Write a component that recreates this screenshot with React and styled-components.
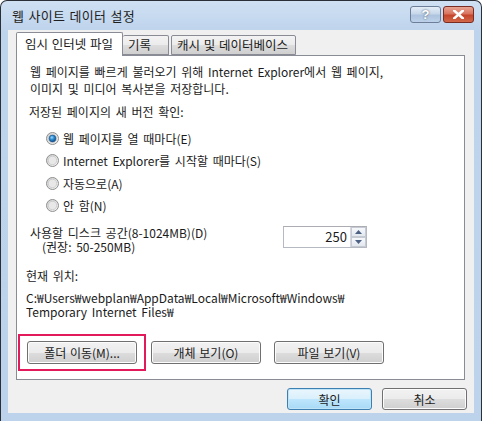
import React from "react";
import styled, { createGlobalStyle } from "styled-components";

const GlobalStyle = createGlobalStyle`
  html, body {
    margin: 0;
    padding: 0;
    background: #ffffff;
  }
  body {
    font-family: "Noto Sans CJK KR", "Liberation Sans", sans-serif;
    font-size: 12px;
    color: #1b1b1b;
    word-spacing: 2px;
  }
`;

const Window = styled.div`
  width: 482px;
  height: 421px;
  box-sizing: border-box;
  border: 1px solid #2b2f38;
  border-bottom: none;
  border-radius: 7px 7px 0 0;
  background: linear-gradient(180deg, #cfe0f3 0px, #bed4ec 30px, #bdd3eb 100%);
  display: flex;
  flex-direction: column;
  overflow: hidden;
`;

const TitleBar = styled.div`
  height: 29px;
  display: flex;
  align-items: center;
  justify-content: space-between;
  padding: 0 7px 0 11px;
  flex-shrink: 0;
`;

const Title = styled.span`
  font-size: 13px;
  color: #1e1e1e;
  letter-spacing: 0.3px;
  word-spacing: 1px;
  white-space: nowrap;
`;

const CaptionButtons = styled.div`
  display: flex;
  gap: 2px;
  margin-top: -2px;
`;

const CaptionButton = styled.div`
  width: 31px;
  height: 17px;
  box-sizing: border-box;
  border: 1px solid ${(p) => (p.$close ? "#7a2b22" : "#6d7f98")};
  border-radius: 3px;
  background: ${(p) =>
    p.$close
      ? "linear-gradient(180deg, #e8a493 0%, #d8735e 45%, #c4452b 55%, #d2684a 100%)"
      : "linear-gradient(180deg, #e4edf7 0%, #c7d7ea 45%, #adc3de 55%, #bdd2ea 100%)"};
  display: flex;
  align-items: center;
  justify-content: center;
  color: #fff;
  font-family: "Liberation Sans", sans-serif;
  font-weight: bold;
  font-size: 13px;
  text-shadow: 0 0 2px #3a4a60;
`;

const Client = styled.div`
  flex: 1;
  margin: 0 7px 8px 7px;
  background: #f0f0f0;
  display: flex;
  flex-direction: column;
  padding: 1px 8px 0 8px;
`;

const Tabs = styled.div`
  display: flex;
  align-items: flex-end;
  height: 24px;
  position: relative;
  z-index: 1;
`;

const Tab = styled.div`
  height: ${(p) => (p.$active ? "24px" : "20px")};
  box-sizing: border-box;
  padding: 0 ${(p) => (p.$active ? "8px" : "5px")};
  margin-right: ${(p) => p.$gap || 0}px;
  border: 1px solid #898c95;
  border-bottom: ${(p) => (p.$active ? "none" : "1px solid #898c95")};
  border-left: ${(p) => (p.$noLeft ? "none" : "1px solid #898c95")};
  border-radius: 2px 2px 0 0;
  background: ${(p) =>
    p.$active ? "#ffffff" : "linear-gradient(180deg, #f3f3f3 0%, #ebebeb 50%, #dddddd 51%, #cfcfcf 100%)"};
  width: ${(p) => p.$w}px;
  display: flex;
  align-items: center;
  font-size: 12.5px;
  word-spacing: 1px;
  white-space: nowrap;
  overflow: hidden;
  line-height: 1;
  margin-bottom: ${(p) => (p.$active ? "-1px" : "0")};
`;

const Panel = styled.div`
  width: 449px;
  height: 325px;
  box-sizing: border-box;
  background: #ffffff;
  border: 1px solid #898c95;
  padding: 7px 10px 0 9px;
  display: flex;
  flex-direction: column;
`;

const Para = styled.p`
  margin: 0 0 0 4px;
  line-height: 17px;
`;

const Label = styled.div`
  margin: ${(p) => p.$m || "0"};
  line-height: ${(p) => p.$lh || 17}px;
  padding-left: ${(p) => p.$pl || 0}px;
`;

const RadioList = styled.div`
  display: flex;
  flex-direction: column;
  padding-left: 20px;
  margin-top: 7px;
`;

const RadioRow = styled.div`
  display: flex;
  align-items: center;
  gap: 4px;
  height: 22.5px;
`;

const DiskRow = styled.div`
  display: flex;
  align-items: flex-start;
  justify-content: space-between;
  margin-top: 9px;
  padding-right: 87px;
`;

const Spinner = styled.div`
  width: 84px;
  height: 22px;
  box-sizing: border-box;
  border: 1px solid #b5b9c2;
  border-top-color: #abadb3;
  display: flex;
  background: #fff;
`;

const SpinValue = styled.div`
  flex: 1;
  text-align: right;
  padding-right: 3px;
  font-size: 13px;
  line-height: 20px;
`;

const SpinButtons = styled.div`
  width: 15px;
  display: flex;
  flex-direction: column;
  border-left: 1px solid #d6d9df;
`;

const SpinButton = styled.div`
  flex: 1;
  box-sizing: border-box;
  border: 1px solid #c5cad3;
  background: linear-gradient(180deg, #f6f8fb 0%, #e3e8ef 100%);
  display: flex;
  align-items: center;
  justify-content: center;
`;

const PathText = styled.div`
  margin-top: 7px;
  line-height: 14px;
`;

const ButtonRow = styled.div`
  display: flex;
  gap: ${(p) => p.$gap || 13}px;
  margin: ${(p) => p.$m || "0"};
`;

const Highlight = styled.div`
  padding: 5px 7px;
  margin: -7px -8px -7px -9px;
  border: 2px solid #e2195b;
  display: flex;
`;

const Button = styled.div`
  width: ${(p) => p.$w || 110}px;
  height: ${(p) => p.$h || 23}px;
  box-sizing: border-box;
  border: 1px solid ${(p) => (p.$default ? "#3c7fb1" : "#707070")};
  border-radius: 3px;
  background: ${(p) =>
    p.$default
      ? "linear-gradient(180deg, #eaf6fd 0%, #d9f0fc 50%, #bee6fd 51%, #a7d9f5 100%)"
      : "linear-gradient(180deg, #f2f2f2 0%, #ebebeb 50%, #dddddd 51%, #cfcfcf 100%)"};
  box-shadow: inset 0 0 0 1px ${(p) => (p.$default ? "#bfe3f7" : "#fcfcfc")};
  display: flex;
  align-items: center;
  justify-content: center;
  font-size: 12px;
  word-spacing: 1px;
  white-space: nowrap;
  color: #1b1b1b;
`;

const Footer = styled.div`
  display: flex;
  justify-content: flex-end;
  gap: 10px;
  padding: 8px 0 0 0;
  margin-right: -1px;
`;

const Radio = ({ checked }) => (
  <svg width="13" height="13" viewBox="0 0 13 13">
    <defs>
      <linearGradient id="rbg" x1="0" y1="0" x2="1" y2="1">
        <stop offset="0" stopColor="#cfcfcf" />
        <stop offset="1" stopColor="#f7f7f7" />
      </linearGradient>
      <radialGradient id="rdot" cx="0.4" cy="0.35" r="0.7">
        <stop offset="0" stopColor="#9fd7fb" />
        <stop offset="0.45" stopColor="#2a8bd0" />
        <stop offset="1" stopColor="#0c4a85" />
      </radialGradient>
    </defs>
    <circle cx="6.5" cy="6.5" r="6" fill="url(#rbg)" stroke="#8e8f8f" strokeWidth="1" />
    <circle cx="6.5" cy="6.5" r="4.2" fill="#e8e8e8" stroke="#c0c0c0" strokeWidth="0.6" />
    {checked && <circle cx="6.5" cy="6.5" r="3.4" fill="url(#rdot)" stroke="#1b4f86" strokeWidth="0.6" />}
  </svg>
);

const Arrow = ({ up }) => (
  <svg width="7" height="4" viewBox="0 0 7 4">
    <path d={up ? "M0 4 L3.5 0 L7 4 Z" : "M0 0 L3.5 4 L7 0 Z"} fill="#4d6185" />
  </svg>
);

export default function App() {
  return (
    <>
      <GlobalStyle />
      <Window>
        <TitleBar>
          <Title>웹 사이트 데이터 설정</Title>
          <CaptionButtons>
            <CaptionButton>?</CaptionButton>
            <CaptionButton $close>
              <svg width="11" height="9" viewBox="0 0 11 9">
                <path d="M1 0.5 L10 8.5 M10 0.5 L1 8.5" stroke="#fff" strokeWidth="2.6" strokeLinecap="square" />
              </svg>
            </CaptionButton>
          </CaptionButtons>
        </TitleBar>
        <Client>
          <Tabs>
            <Tab $active $w={107}>임시 인터넷 파일</Tab>
            <Tab $noLeft $w={46} $gap={2}>기록</Tab>
            <Tab $w={125}>캐시 및 데이터베이스</Tab>
          </Tabs>
          <Panel>
            <Para>
              웹 페이지를 빠르게 불러오기 위해 Internet Explorer에서 웹 페이지,
              <br />
              이미지 및 미디어 복사본을 저장합니다.
            </Para>
            <Label $m="6px 0 0 3px">저장된 페이지의 새 버전 확인:</Label>
            <RadioList>
              <RadioRow>
                <Radio checked />
                <span>웹 페이지를 열 때마다(E)</span>
              </RadioRow>
              <RadioRow>
                <Radio />
                <span>Internet Explorer를 시작할 때마다(S)</span>
              </RadioRow>
              <RadioRow>
                <Radio />
                <span>자동으로(A)</span>
              </RadioRow>
              <RadioRow>
                <Radio />
                <span>안 함(N)</span>
              </RadioRow>
            </RadioList>
            <DiskRow>
              <div>
                <Label $lh={14} $pl={4}>사용할 디스크 공간(8-1024MB)(D)</Label>
                <Label $lh={14} $pl={16}>(권장: 50-250MB)</Label>
              </div>
              <Spinner>
                <SpinValue>250</SpinValue>
                <SpinButtons>
                  <SpinButton>
                    <Arrow up />
                  </SpinButton>
                  <SpinButton>
                    <Arrow />
                  </SpinButton>
                </SpinButtons>
              </Spinner>
            </DiskRow>
            <Label $m="13px 0 0 0">현재 위치:</Label>
            <PathText>
              C:₩Users₩webplan₩AppData₩Local₩Microsoft₩Windows₩
              <br />
              Temporary Internet Files₩
            </PathText>
            <ButtonRow $m="22px 0 0 1px">
              <Highlight>
                <Button>폴더 이동(M)...</Button>
              </Highlight>
              <Button>개체 보기(O)</Button>
              <Button>파일 보기(V)</Button>
            </ButtonRow>
          </Panel>
          <Footer>
            <Button $default $w={85} $h={22}>확인</Button>
            <Button $w={85} $h={22}>취소</Button>
          </Footer>
        </Client>
      </Window>
    </>
  );
}
